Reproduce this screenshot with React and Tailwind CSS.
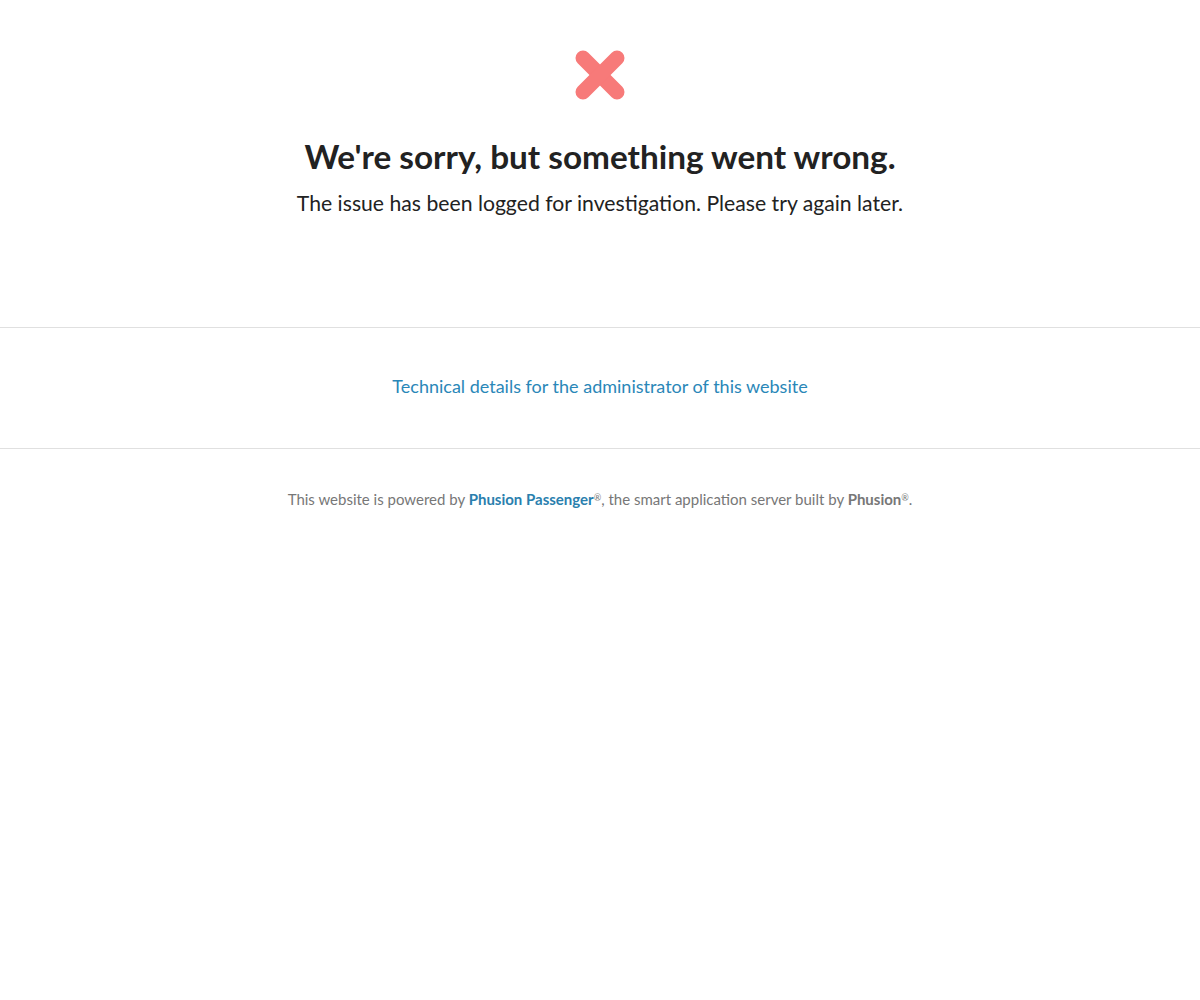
export default function App() {
  return (
    <div className="min-h-[1000px] bg-white text-center">
      <div className="font-['Lato','Liberation_Sans',sans-serif]">
        <div className="flex justify-center pt-[50px]">
          <svg width="50" height="50" viewBox="0 0 50 50">
            <g stroke="#f77a79" strokeWidth="15" strokeLinecap="round">
              <line x1="8" y1="8" x2="42" y2="42" />
              <line x1="42" y1="8" x2="8" y2="42" />
            </g>
          </svg>
        </div>
        <h1 className="mt-[36px] text-[33.3px] leading-[40px] font-bold text-[#222]">We're sorry, but something went wrong.</h1>
        <p className="mt-[13px] text-[21.2px] leading-[28px] text-[#222]">The issue has been logged for investigation. Please try again later.</p>
        <div className="mt-[110px] border-t border-[#e0e0e0]"></div>
        <div className="pt-[45px] pb-[49px]">
          <a className="text-[18px] leading-[26px] text-[#2a87b8]">Technical details for the administrator of this website</a>
        </div>
        <div className="border-t border-[#e0e0e0]"></div>
        <p className="mt-[40px] text-[15px] leading-[20px] text-[#777]">
          This website is powered by <b className="text-[#2a7fae]">Phusion Passenger</b><sup className="text-[9px]">®</sup>, the smart application server built by <b className="text-[#777]">Phusion</b><sup className="text-[9px]">®</sup>.
        </p>
      </div>
    </div>
  );
}
